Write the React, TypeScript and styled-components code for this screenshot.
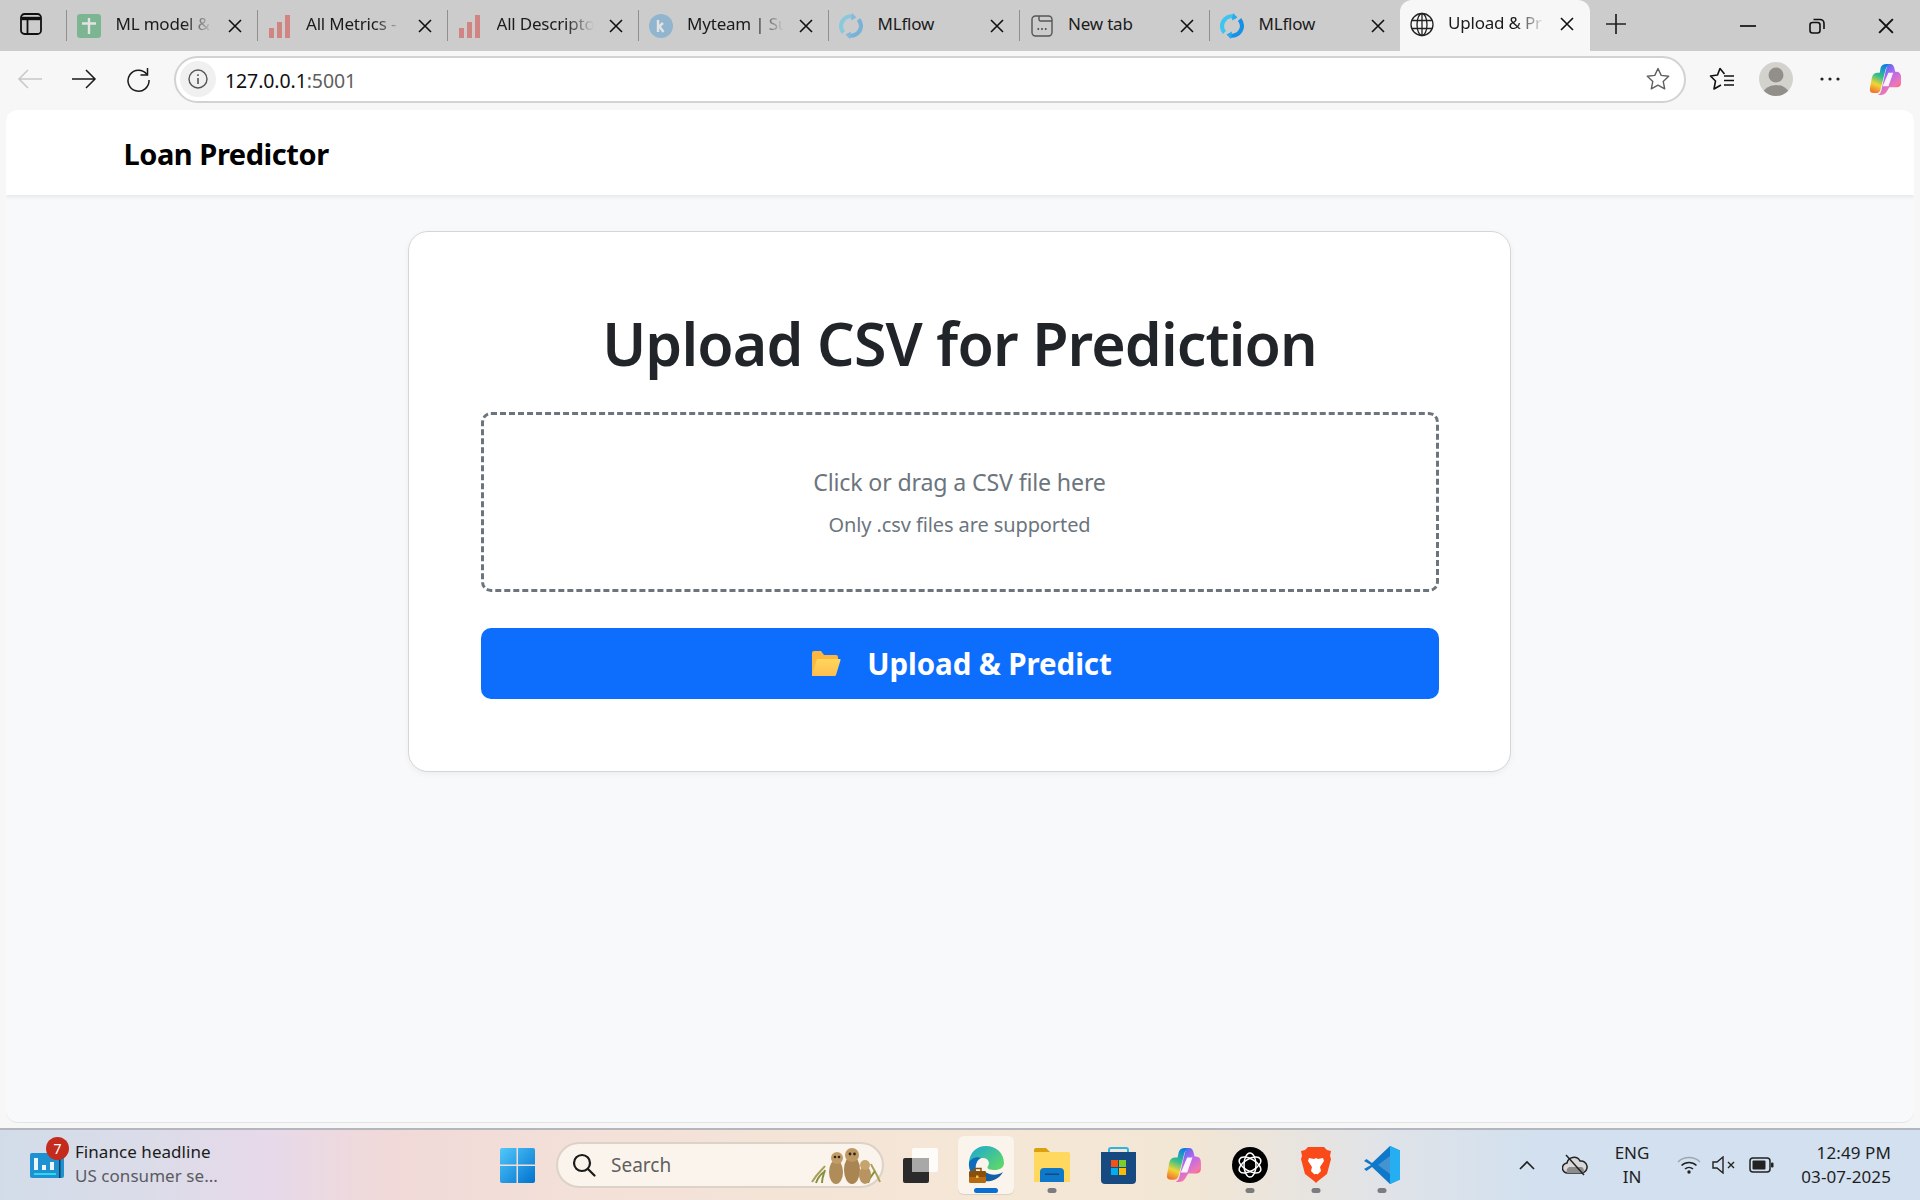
import React from 'react'
import styled, { createGlobalStyle } from 'styled-components'

const GlobalStyle = createGlobalStyle`
  html, body { margin: 0; padding: 0; background: #f7f7f7; }
  * { box-sizing: border-box; }
  body { font-family: "Noto Sans", "Open Sans", Arial, sans-serif; }
`

const Screen = styled.div`
  width: 1920px;
  height: 1200px;
  display: flex;
  flex-direction: column;
  overflow: hidden;
  background: #f7f7f7;
`

/* ---------- tab strip ---------- */
const TabStrip = styled.div`
  height: 51px;
  flex: none;
  background: #cccccc;
  display: flex;
  align-items: stretch;
`
const SideButton = styled.div`
  width: 66px;
  display: flex;
  align-items: center;
  padding-left: 20px;
  padding-bottom: 3px;
`
const TabItem = styled.div<{ $active?: boolean }>`
  width: 190.5px;
  flex: none;
  display: flex;
  align-items: center;
  position: relative;
  padding-left: 10px;
  border-left: ${({ $active }) => ($active ? 'none' : '1px solid #8f8f8f')};
  ${({ $active }) => $active && `
    background: #f7f7f7;
    border-radius: 12px 12px 0 0;
    padding-bottom: 3px;
  `}
  ${({ $active }) => !$active && `
    margin-top: 10px;
    height: 31px;
    align-self: flex-start;
  `}
`
const FavSlot = styled.div<{ $dim?: boolean }>`
  width: 24px;
  height: 24px;
  flex: none;
  display: flex;
  align-items: center;
  justify-content: center;
  opacity: ${({ $dim }) => ($dim ? 0.45 : 1)};
`
const TabTitle = styled.div<{ $fade?: boolean }>`
  width: 97px;
  margin-left: 14.5px;
  font-size: 17px;
  line-height: 24px;
  margin-top: -3px;
  color: #1b1b1b;
  white-space: nowrap;
  letter-spacing: -0.2px;
  ${({ $fade }) => $fade && `
    -webkit-mask-image: linear-gradient(90deg, #000 70%, transparent 100%);
    mask-image: linear-gradient(90deg, #000 70%, transparent 100%);
  `}
`
const CloseSlot = styled.div`
  margin-left: 14px;
  width: 16px;
  height: 16px;
  display: flex;
  align-items: center;
  justify-content: center;
`
const NewTab = styled.div`
  width: 52px;
  display: flex;
  align-items: center;
  justify-content: center;
  padding-bottom: 3px;
`
const WindowControls = styled.div`
  margin-left: auto;
  display: flex;
  align-items: center;
`
const WindowButton = styled.div`
  width: 69px;
  height: 51px;
  display: flex;
  align-items: center;
  justify-content: center;
`

/* ---------- toolbar ---------- */
const Toolbar = styled.div`
  height: 59px;
  flex: none;
  display: flex;
  align-items: center;
  padding: 0 6px 3px 3px;
  background: #f7f7f7;
`
const ToolButton = styled.div<{ $wide?: boolean }>`
  width: ${({ $wide }) => ($wide ? '57px' : '54px')};
  height: 44px;
  flex: none;
  display: flex;
  align-items: center;
  justify-content: center;
`
const AddressBar = styled.div`
  flex: 1;
  height: 47px;
  margin: 0 9px;
  border: 2px solid #d2d2d2;
  border-radius: 24px;
  background: #ffffff;
  display: flex;
  align-items: center;
  padding: 0 14px 0 4px;
`
const SiteInfo = styled.div`
  width: 36px;
  height: 36px;
  border-radius: 50%;
  background: #f0f0f0;
  display: flex;
  align-items: center;
  justify-content: center;
`
const UrlText = styled.div`
  margin-left: 9px;
  margin-top: 3px;
  font-size: 19.5px;
  letter-spacing: -0.1px;
  color: #111;
  flex: 1;
`
const UrlPort = styled.span`
  color: #5f5f5f;
`

/* ---------- page ---------- */
const PagePanel = styled.div`
  flex: 1;
  margin: 0 6px 5px 6px;
  border-radius: 12px;
  background: #f8f9fa;
  border-bottom: 1px solid #e4e4e4;
  overflow: hidden;
  display: flex;
  flex-direction: column;
`
const NavBar = styled.div`
  height: 85px;
  flex: none;
  background: #ffffff;
  display: flex;
  align-items: center;
  padding: 1px 0 0 117.5px;
  box-shadow: 0 2px 4px rgba(0, 0, 0, 0.08);
`
const Brand = styled.div`
  font-size: 29px;
  font-weight: 700;
  color: #000;
  letter-spacing: -0.45px;
`
const Main = styled.div`
  display: flex;
  justify-content: center;
  padding: 36px 2px 0 0;
`
const Card = styled.div`
  width: 1103px;
  height: 541px;
  background: #ffffff;
  border: 1px solid #d4d6d8;
  border-radius: 20px;
  box-shadow: 0 2px 6px rgba(0, 0, 0, 0.05);
  padding: 57px 71px 0 72px;
`
const Title = styled.h1`
  margin: 0 0 15px;
  height: 108px;
  display: flex;
  justify-content: center;
  align-items: center;
  font-size: 59px;
  font-weight: 580;
  color: #212529;
  letter-spacing: -0.85px;
`
const DropZone = styled.div`
  height: 180px;
  border: 3px dashed #6c757d;
  border-radius: 10px;
  display: flex;
  flex-direction: column;
  align-items: center;
  justify-content: center;
  color: #6c757d;
`
const DropTitle = styled.div`
  font-size: 23.2px;
  letter-spacing: -0.17px;
  line-height: 36px;
  margin-bottom: 10px;
  margin-top: -4px;
`
const DropHint = styled.div`
  font-size: 20px;
  letter-spacing: -0.1px;
  line-height: 30px;
  margin-bottom: -4px;
`
const PrimaryButton = styled.div`
  margin-top: 36px;
  height: 71px;
  border-radius: 10px;
  background: #0d6efd;
  display: flex;
  align-items: center;
  justify-content: center;
  gap: 26px;
  padding-left: 4px;
  color: #fff;
  font-size: 29.5px;
  font-weight: 700;
  letter-spacing: -0.1px;
`

/* ---------- taskbar ---------- */
const Taskbar = styled.div`
  height: 72px;
  flex: none;
  display: flex;
  align-items: center;
  border-top: 2px solid #b4b6bd;
  background: linear-gradient(90deg, #d2dce9 0%, #dcdce9 8%, #e7d9ea 14%, #f0d9d8 20%, #f3e0d8 30%, #f5e7d6 52%, #f2e6d4 62%, #e0e3e8 72%, #d2e0ef 80%, #d2e0ef 100%);
`
const NewsWidget = styled.div`
  width: 500px;
  flex: none;
  display: flex;
  align-items: center;
  padding-left: 30px;
  position: relative;
`
const CountBadge = styled.div`
  position: absolute;
  left: 46px;
  top: -6px;
  width: 23px;
  height: 23px;
  border-radius: 50%;
  background: #c42b1c;
  color: #fff;
  font-size: 14px;
  display: flex;
  align-items: center;
  justify-content: center;
`
const NewsText = styled.div`
  margin-left: 11px;
  margin-top: -2px;
  display: flex;
  flex-direction: column;
  gap: 2px;
  font-size: 17px;
  line-height: 22px;
  letter-spacing: 0.05px;
`
const NewsHead = styled.div`
  color: #1b1b1b;
`
const NewsSub = styled.div`
  color: #5a5a62;
`
const StartSlot = styled.div`
  width: 35px;
  height: 35px;
  flex: none;
`
const SearchBox = styled.div`
  width: 328px;
  height: 46px;
  flex: none;
  margin-left: 21px;
  border-radius: 23px;
  background: #fbf4ec;
  border: 2px solid #ddd2c8;
  display: flex;
  align-items: center;
  padding-left: 14px;
  color: #5f5f5f;
  font-size: 19px;
`
const SearchLabel = styled.span`
  margin-left: 15px;
  flex: 1;
`
const AppIcons = styled.div`
  margin-left: 3px;
  display: flex;
`
const AppSlot = styled.div<{ $active?: boolean }>`
  width: 66px;
  height: 58px;
  flex: none;
  display: flex;
  align-items: center;
  justify-content: center;
  position: relative;
  &::before {
    content: '';
    display: ${({ $active }) => ($active ? 'block' : 'none')};
    position: absolute;
    inset: 0 5px 0 5px;
    background: rgba(255, 255, 255, 0.55);
    border-radius: 6px;
    box-shadow: 0 1px 1px rgba(0, 0, 0, 0.1);
  }
  & > svg {
    position: relative;
  }
`
const RunDot = styled.div<{ $active?: boolean }>`
  position: absolute;
  bottom: 1px;
  left: 50%;
  transform: translateX(-50%);
  width: ${({ $active }) => ($active ? '24px' : '9px')};
  height: 5px;
  border-radius: 3px;
  background: ${({ $active }) => ($active ? '#0a6fd0' : '#7b7b80')};
`
const Tray = styled.div`
  margin-left: auto;
  padding-right: 29px;
  display: flex;
  align-items: center;
`
const TraySlot = styled.div<{ $w: number }>`
  width: ${({ $w }) => $w}px;
  flex: none;
  display: flex;
  align-items: center;
  justify-content: center;
`
const LangBlock = styled.div`
  width: 58px;
  margin-right: 10px;
  text-align: center;
  font-size: 17px;
  line-height: 24px;
  color: #1f1f1f;
`
const ClockBlock = styled.div`
  width: 110px;
  text-align: right;
  font-size: 17px;
  line-height: 24px;
  letter-spacing: 0.1px;
  color: #1f1f1f;
`

/* ---------- icons ---------- */
const CloseIcon = ({ size = 14, w = 1.6 }: { size?: number; w?: number }) => (
  <svg width={size} height={size} viewBox="0 0 14 14" fill="none" stroke="#111" strokeWidth={w}>
    <path d="M1 1l12 12M13 1L1 13" />
  </svg>
)
const SheetFav = () => (
  <svg width="24" height="24" viewBox="0 0 24 24">
    <rect width="24" height="24" rx="3" fill="#1c9a4c" />
    <path d="M12 4v16M5 9.500h14" stroke="#fff" strokeWidth="2.400" />
  </svg>
)
const BarsFav = () => (
  <svg width="22" height="24" viewBox="0 0 22 24" fill="#d9302a">
    <rect x="0" y="14" width="5" height="10" />
    <rect x="8" y="8" width="5" height="16" />
    <rect x="16" y="1" width="5" height="23" />
  </svg>
)
const KFav = () => (
  <svg width="24" height="24" viewBox="0 0 24 24">
    <circle cx="12" cy="12" r="12" fill="#4a9ad4" />
    <path d="M9 6v12M9 13.500l5-4.500M10.500 12.500l4 5.500" stroke="#fff" strokeWidth="2.400" fill="none" />
  </svg>
)
const FlowFav = () => (
  <svg width="24" height="26" viewBox="0 0 24 26" fill="none" strokeWidth="4.200">
    <path d="M14 3.500A9.800 9.800 0 0 0 4.500 19.500" stroke="#3cc4f2" />
    <path d="M10 22.500A9.800 9.800 0 0 0 19.500 6.500" stroke="#1592e6" />
    <path d="M13 0l4.500 4.500-5.500 3zM11 26l-4.500-4.500 5.500-3z" fill="#2aa8ec" />
  </svg>
)
const NewTabFav = () => (
  <svg width="22" height="24" viewBox="0 0 22 24" fill="none" stroke="#555" strokeWidth="1.400">
    <rect x="1" y="2" width="20" height="20" rx="3.500" />
    <path d="M8 2v3.500a1.500 1.500 0 0 0 1.500 1.500H21" />
    <path d="M6.500 15h1.600M10.200 15h1.600M13.900 15h1.600" strokeWidth="1.800" />
  </svg>
)
const GlobeFav = () => (
  <svg width="25" height="25" viewBox="0 0 24 24" fill="none" stroke="#222" strokeWidth="1.300">
    <circle cx="12" cy="12" r="11" />
    <ellipse cx="12" cy="12" rx="5" ry="11" />
    <path d="M12 1v22M1.800 8h20.400M1.800 16h20.400" />
  </svg>
)
const SidebarIcon = () => (
  <svg width="22" height="22" viewBox="0 0 22 22" fill="none" stroke="#111" strokeWidth="1.800">
    <rect x="1" y="1" width="20" height="20" rx="3.500" />
    <path d="M1.500 5.500h19" strokeWidth="3.400" />
    <path d="M7.500 6v15" />
  </svg>
)
const PlusIcon = () => (
  <svg width="22" height="22" viewBox="0 0 22 22" stroke="#222" strokeWidth="1.700">
    <path d="M11 1v20M1 11h20" />
  </svg>
)
const MinimizeIcon = () => (
  <svg width="16" height="16" viewBox="0 0 16 16" stroke="#111" strokeWidth="1.700">
    <path d="M0 8h16" />
  </svg>
)
const RestoreIcon = () => (
  <svg width="16" height="16" viewBox="0 0 16 16" fill="none" stroke="#111" strokeWidth="1.600">
    <rect x="1" y="4.500" width="10" height="10.500" rx="2.500" />
    <path d="M4.500 1.500H11a4 4 0 0 1 4 4V11" />
  </svg>
)
const ArrowIcon = ({ left, color }: { left?: boolean; color: string }) => (
  <svg width="26" height="22" viewBox="0 0 26 22" fill="none" stroke={color} strokeWidth="1.500">
    {left ? <path d="M25 11H2M11 2l-9 9 9 9" /> : <path d="M1 11h23M15 2l9 9-9 9" />}
  </svg>
)
const ReloadIcon = () => (
  <svg width="26" height="26" viewBox="0 0 26 26" fill="none" stroke="#1a1a1a" strokeWidth="1.500">
    <path d="M22 8.500A10.500 10.500 0 1 0 24 14" />
    <path d="M22.500 2v7h-7" />
  </svg>
)
const InfoIcon = () => (
  <svg width="20" height="20" viewBox="0 0 20 20" fill="none" stroke="#555" strokeWidth="1.400">
    <circle cx="10" cy="10" r="9" />
    <path d="M10 9v6M10 5.200v1.800" strokeWidth="1.600" />
  </svg>
)
const StarIcon = () => (
  <svg width="24" height="24" viewBox="0 0 24 24" fill="none" stroke="#5f5f5f" strokeWidth="1.400" strokeLinejoin="round">
    <path d="M12 1.500l3.200 6.900 7.500.9-5.500 5.100 1.500 7.400-6.700-3.700-6.700 3.700 1.500-7.400L1.300 9.300l7.500-.9z" />
  </svg>
)
const FavoritesIcon = () => (
  <svg width="26" height="24" viewBox="0 0 26 24" fill="none" stroke="#111" strokeWidth="1.600" strokeLinejoin="round">
    <path d="M15.500 7L11 1.500 8.500 8 1.500 9l5 5-1.500 8 7-4" />
    <path d="M15 9h10M15 13.500h10M15 18h10" />
  </svg>
)
const ProfileIcon = () => (
  <svg width="34" height="34" viewBox="0 0 34 34">
    <defs>
      <clipPath id="avatarClip"><circle cx="17" cy="17" r="17" /></clipPath>
    </defs>
    <circle cx="17" cy="17" r="17" fill="#d4d2cd" />
    <g clipPath="url(#avatarClip)" fill="#928f8a">
      <circle cx="17" cy="13" r="7.500" />
      <ellipse cx="17" cy="32" rx="13" ry="9" />
    </g>
  </svg>
)
const DotsIcon = () => (
  <svg width="20" height="4" viewBox="0 0 20 4" fill="#222">
    <circle cx="2" cy="2" r="1.600" />
    <circle cx="10" cy="2" r="1.600" />
    <circle cx="18" cy="2" r="1.600" />
  </svg>
)
const CopilotIcon = ({ id, size }: { id: string; size: number }) => (
  <svg width={size} height={size} viewBox="0 0 34 34">
    <defs>
      <linearGradient id={`${id}a`} x1="0.6" y1="0" x2="0.3" y2="1">
        <stop offset="0" stopColor="#0f7fe6" />
        <stop offset="0.42" stopColor="#35c08c" />
        <stop offset="0.72" stopColor="#f2d535" />
        <stop offset="1" stopColor="#f0762e" />
      </linearGradient>
      <linearGradient id={`${id}b`} x1="0.2" y1="0" x2="0.8" y2="1">
        <stop offset="0" stopColor="#2b6fe8" />
        <stop offset="0.4" stopColor="#b668f2" />
        <stop offset="0.75" stopColor="#f278b0" />
        <stop offset="1" stopColor="#f0552e" />
      </linearGradient>
    </defs>
    <path d="M12 5Q13 1 18 1H22Q18 3 17 7L12 27Q11 31 7 31H5Q0 31 1 26L3 15Q4 10 9 10H11Z" fill={`url(#${id}a)`} />
    <path d="M20 1H22Q25 1 26 5L27 9H28Q33 9 33 15V20Q33 25 28 25H21L18 30Q16 33 12 33H9Q12 32 13 27L17 9Q18 4 20 1Z" fill={`url(#${id}b)`} />
    <path d="M20 10H25L20 24H14Z" fill="#ffffff" fillOpacity="0.92" />
  </svg>
)
const FolderEmoji = () => (
  <svg width="30" height="27" viewBox="0 0 30 27">
    <defs>
      <linearGradient id="folderFront" x1="0" y1="0" x2="0" y2="1">
        <stop offset="0" stopColor="#ffd75c" />
        <stop offset="1" stopColor="#ffbe50" />
      </linearGradient>
    </defs>
    <path d="M1 3a2 2 0 0 1 2-2h7l3 4h12a2 2 0 0 1 2 2v4H1z" fill="#fbb740" />
    <path d="M1 3v22a1 1 0 0 0 1 1h2l4-16z" fill="#fbb740" />
    <path d="M7 9h21.500a1 1 0 0 1 1 1.300L25 25a1.500 1.500 0 0 1-1.500 1H2a1 1 0 0 1-1-1.300L5.500 10.500A2 2 0 0 1 7 9z" fill="url(#folderFront)" />
  </svg>
)
const NewsIcon = () => (
  <svg width="34" height="25" viewBox="0 0 34 25">
    <rect width="34" height="25" rx="2" fill="#1e92d0" />
    <rect x="4" y="5" width="4" height="12" fill="#eaf6fc" />
    <rect x="12" y="12" width="4" height="5" fill="#eaf6fc" />
    <rect x="20" y="9" width="4" height="8" fill="#eaf6fc" />
    <rect x="4" y="20" width="22" height="2" fill="#2fd6f0" />
    <rect x="29" y="3" width="1.500" height="22" fill="#0e3a5c" />
  </svg>
)
const StartIcon = () => (
  <svg width="35" height="35" viewBox="0 0 35 35">
    <defs>
      <linearGradient id="startGrad" x1="0" y1="0" x2="1" y2="1">
        <stop offset="0" stopColor="#52c8fa" />
        <stop offset="1" stopColor="#0072cf" />
      </linearGradient>
    </defs>
    <path d="M0 2a2 2 0 0 1 2-2h14.500v16.500H0zM18 0h15a2 2 0 0 1 2 2v14.500H18zM0 18h16.500v17H2a2 2 0 0 1-2-2zM18 18h17v15a2 2 0 0 1-2 2H18z" fill="url(#startGrad)" />
  </svg>
)
const SearchGlyph = () => (
  <svg width="24" height="24" viewBox="0 0 24 24" fill="none" stroke="#1a1a1a" strokeWidth="2.200">
    <circle cx="10" cy="10" r="8" />
    <path d="M16 16l6.500 6.500" strokeLinecap="round" />
  </svg>
)
const Meerkats = () => (
  <svg width="72" height="38" viewBox="0 0 72 38">
    <path d="M2 36c6-10 10-12 13-16M70 36c-4-10-7-13-9-18" stroke="#a8a05a" strokeWidth="2" fill="none" />
    <path d="M6 37c2-6 5-9 8-11M12 37c0-6 2-9 3-13M58 37c2-7 5-9 7-12" stroke="#88903f" strokeWidth="2" fill="none" />
    <ellipse cx="26" cy="26" rx="7" ry="12" fill="#b08c58" />
    <circle cx="27" cy="12" r="6" fill="#c09c66" />
    <circle cx="25" cy="11" r="1.300" fill="#2e2418" />
    <circle cx="29" cy="11" r="1.300" fill="#2e2418" />
    <ellipse cx="42" cy="24" rx="8" ry="14" fill="#a98552" />
    <circle cx="42" cy="9" r="7" fill="#bd9862" />
    <circle cx="40" cy="8" r="1.400" fill="#2e2418" />
    <circle cx="44.500" cy="8" r="1.400" fill="#2e2418" />
    <ellipse cx="55" cy="29" rx="6" ry="9" fill="#b89460" />
    <circle cx="55" cy="19" r="5" fill="#c6a46e" />
  </svg>
)
const TaskViewIcon = () => (
  <svg width="36" height="36" viewBox="0 0 36 36">
    <rect x="1" y="11" width="26" height="25" rx="2" fill="#2b2b2b" />
    <rect x="10" y="1" width="26" height="24" rx="2" fill="#ffffff" fillOpacity="0.85" />
    <rect x="10" y="11" width="17" height="14" fill="#a8a8a8" />
  </svg>
)
const EdgeIcon = () => (
  <svg width="36" height="38" viewBox="0 0 36 38">
    <defs>
      <linearGradient id="edgeTop" x1="0" y1="0" x2="1" y2="0.8">
        <stop offset="0" stopColor="#1aa6d8" />
        <stop offset="1" stopColor="#5fd868" />
      </linearGradient>
    </defs>
    <path d="M1 16C2 6 9 0 18 0c10 0 18 7 18 17 0 5-5 7-9 7-5 0-9-1-7-4 2-2 1-8-5-8-7 0-12 3-14 4z" fill="url(#edgeTop)" />
    <path d="M1 16c2-3 7-6 12-4-4 2-6 7-5 12 1 4 0 7 4 10C5 32 0 25 1 16z" fill="#0f6cbd" />
    <path d="M12 34c8 3 18 1 23-8-6 4-13 3-18 0-3 3-6 6-5 8z" fill="#125fa8" />
    <rect x="1" y="25" width="17" height="12" rx="1.500" fill="#b66a10" />
    <rect x="1" y="25" width="17" height="6" rx="1.500" fill="#8a4f0a" />
    <path d="M6 25v-2.500h7V25" fill="none" stroke="#8a4f0a" strokeWidth="1.500" />
    <rect x="8" y="29.500" width="2.500" height="2.500" fill="#f3c24a" />
  </svg>
)
const ExplorerIcon = () => (
  <svg width="36" height="34" viewBox="0 0 36 34">
    <path d="M0 2a2 2 0 0 1 2-2h10l4 4H0z" fill="#d9a010" />
    <path d="M0 4h34a2 2 0 0 1 2 2v28H0z" fill="#ffd95f" />
    <path d="M6 24a4 4 0 0 1 4-4h16a4 4 0 0 1 4 4v10H6z" fill="#0f78c8" />
    <rect x="11" y="25.500" width="14" height="1.500" fill="#0b4d86" />
  </svg>
)
const StoreIcon = () => (
  <svg width="35" height="37" viewBox="0 0 35 37">
    <path d="M8 7V3a2 2 0 0 1 2-2h15a2 2 0 0 1 2 2v4" fill="none" stroke="#2ab4e8" strokeWidth="2" />
    <path d="M0 5h35v28a4 4 0 0 1-4 4H4a4 4 0 0 1-4-4z" fill="#174a80" />
    <rect x="10" y="13" width="7" height="7" fill="#f1511b" />
    <rect x="18" y="13" width="7" height="7" fill="#80cc28" />
    <rect x="10" y="21" width="7" height="7" fill="#00adef" />
    <rect x="18" y="21" width="7" height="7" fill="#fbbc09" />
  </svg>
)
const ChatGptIcon = () => (
  <svg width="36" height="36" viewBox="0 0 36 36">
    <circle cx="18" cy="18" r="18" fill="#000" />
    <g fill="none" stroke="#fff" strokeWidth="1.500">
      <ellipse cx="18" cy="18" rx="6" ry="12" />
      <ellipse cx="18" cy="18" rx="6" ry="12" transform="rotate(60 18 18)" />
      <ellipse cx="18" cy="18" rx="6" ry="12" transform="rotate(120 18 18)" />
    </g>
  </svg>
)
const BraveIcon = () => (
  <svg width="30" height="36" viewBox="0 0 30 36">
    <path d="M7 0h16l3 3 4 1-1 5 1 3-4 15-9 7-2 2-2-2-9-7L0 12l1-3-1-5 4-1z" fill="#fb4a1a" />
    <path d="M8 11l5 1 2-1 2 1 5-1 1 3-4 6 1 4-4 4h-2l-4-4 1-4-4-6z" fill="#fff" />
    <path d="M13 27h4l-2 2z" fill="#fb4a1a" />
  </svg>
)
const VsCodeIcon = () => (
  <svg width="36" height="38" viewBox="0 0 36 38">
    <path d="M26 0l10 4.500v29L26 38 8 21l-5.500 4L0 23l7-4-7-4 2.500-2L8 17z" fill="#0f78c8" />
    <path d="M26 0l10 4.500v29L26 38z" fill="#26aef2" />
    <path d="M26 10L14 19l12 9z" fill="#e4e6ec" opacity="0.25" />
  </svg>
)
const ChevronUpIcon = () => (
  <svg width="16" height="10" viewBox="0 0 16 10" fill="none" stroke="#222" strokeWidth="1.700">
    <path d="M1 9l7-7 7 7" />
  </svg>
)
const CloudOffIcon = () => (
  <svg width="26" height="22" viewBox="0 0 26 22">
    <path d="M6 19a5 5 0 0 1-1-10 7 7 0 0 1 13-2 5.500 5.500 0 0 1 2 12z" fill="#d8d8d8" stroke="#222" strokeWidth="1.500" />
    <path d="M5 19a5 5 0 0 1 2-6h13a4 4 0 0 1 1 6z" fill="#8c8c8c" />
    <path d="M4 1l18 20" stroke="#222" strokeWidth="1.500" />
  </svg>
)
const WifiIcon = () => (
  <svg width="24" height="18" viewBox="0 0 24 18" fill="none" strokeWidth="1.500">
    <path d="M1 6a16 16 0 0 1 22 0" stroke="#9fa6ae" />
    <path d="M4.500 9.500a11 11 0 0 1 15 0M8 13a6 6 0 0 1 8 0" stroke="#222" />
    <circle cx="12" cy="16" r="1.700" fill="#222" />
  </svg>
)
const MutedIcon = () => (
  <svg width="24" height="18" viewBox="0 0 24 18" fill="none" stroke="#222" strokeWidth="1.400">
    <path d="M1 6h4l6-5v16l-6-5H1z" />
    <path d="M16 6l6 6M22 6l-6 6" />
  </svg>
)
const BatteryIcon = () => (
  <svg width="25" height="16" viewBox="0 0 25 16">
    <rect x="1" y="1" width="20" height="14" rx="3" fill="none" stroke="#222" strokeWidth="1.500" />
    <rect x="3.500" y="3.500" width="13" height="9" rx="1" fill="#222" />
    <rect x="22" y="5.500" width="2.500" height="5" rx="1" fill="#222" />
  </svg>
)

/* ---------- data ---------- */
const tabs = [
  { title: 'ML model &', icon: <SheetFav />, dim: true, fade: true },
  { title: 'All Metrics -', icon: <BarsFav />, dim: true, fade: true },
  { title: 'All Descripto', icon: <BarsFav />, dim: true, fade: true },
  { title: 'Myteam | Su', icon: <KFav />, dim: true, fade: true },
  { title: 'MLflow', icon: <FlowFav />, dim: true },
  { title: 'New tab', icon: <NewTabFav /> },
  { title: 'MLflow', icon: <FlowFav /> },
  { title: 'Upload & Pr', icon: <GlobeFav />, active: true, fade: true },
]

const apps = [
  { icon: <TaskViewIcon /> },
  { icon: <EdgeIcon />, active: true, dot: true },
  { icon: <ExplorerIcon />, dot: true },
  { icon: <StoreIcon /> },
  { icon: <CopilotIcon id="taskCopilot" size={36} /> },
  { icon: <ChatGptIcon />, dot: true },
  { icon: <BraveIcon />, dot: true },
  { icon: <VsCodeIcon />, dot: true },
]

export default function App() {
  return (
    <Screen>
      <GlobalStyle />
      <TabStrip>
        <SideButton><SidebarIcon /></SideButton>
        {tabs.map((tab, i) => (
          <TabItem key={i} $active={tab.active}>
            <FavSlot $dim={tab.dim}>{tab.icon}</FavSlot>
            <TabTitle $fade={tab.fade}>{tab.title}</TabTitle>
            <CloseSlot><CloseIcon /></CloseSlot>
          </TabItem>
        ))}
        <NewTab><PlusIcon /></NewTab>
        <WindowControls>
          <WindowButton><MinimizeIcon /></WindowButton>
          <WindowButton><RestoreIcon /></WindowButton>
          <WindowButton><CloseIcon size={16} w={1.7} /></WindowButton>
        </WindowControls>
      </TabStrip>

      <Toolbar>
        <ToolButton><ArrowIcon left color="#c8c8c8" /></ToolButton>
        <ToolButton><ArrowIcon color="#1a1a1a" /></ToolButton>
        <ToolButton><ReloadIcon /></ToolButton>
        <AddressBar>
          <SiteInfo><InfoIcon /></SiteInfo>
          <UrlText>127.0.0.1<UrlPort>:5001</UrlPort></UrlText>
          <StarIcon />
        </AddressBar>
        <ToolButton><FavoritesIcon /></ToolButton>
        <ToolButton><ProfileIcon /></ToolButton>
        <ToolButton><DotsIcon /></ToolButton>
        <ToolButton $wide><CopilotIcon id="barCopilot" size={33} /></ToolButton>
      </Toolbar>

      <PagePanel>
        <NavBar><Brand>Loan Predictor</Brand></NavBar>
        <Main>
          <Card>
            <Title>Upload CSV for Prediction</Title>
            <DropZone>
              <DropTitle>Click or drag a CSV file here</DropTitle>
              <DropHint>Only .csv files are supported</DropHint>
            </DropZone>
            <PrimaryButton><FolderEmoji />Upload &amp; Predict</PrimaryButton>
          </Card>
        </Main>
      </PagePanel>

      <Taskbar>
        <NewsWidget>
          <NewsIcon />
          <CountBadge>7</CountBadge>
          <NewsText>
            <NewsHead>Finance headline</NewsHead>
            <NewsSub>US consumer se...</NewsSub>
          </NewsText>
        </NewsWidget>
        <StartSlot><StartIcon /></StartSlot>
        <SearchBox>
          <SearchGlyph />
          <SearchLabel>Search</SearchLabel>
          <Meerkats />
        </SearchBox>
        <AppIcons>
          {apps.map((app, i) => (
            <AppSlot key={i} $active={app.active}>
              {app.icon}
              {app.dot && <RunDot $active={app.active} />}
            </AppSlot>
          ))}
        </AppIcons>
        <Tray>
          <TraySlot $w={40}><ChevronUpIcon /></TraySlot>
          <TraySlot $w={56}><CloudOffIcon /></TraySlot>
          <LangBlock>ENG<br />IN</LangBlock>
          <TraySlot $w={36}><WifiIcon /></TraySlot>
          <TraySlot $w={34}><MutedIcon /></TraySlot>
          <TraySlot $w={40}><BatteryIcon /></TraySlot>
          <ClockBlock>12:49 PM<br />03-07-2025</ClockBlock>
        </Tray>
      </Taskbar>
    </Screen>
  )
}
